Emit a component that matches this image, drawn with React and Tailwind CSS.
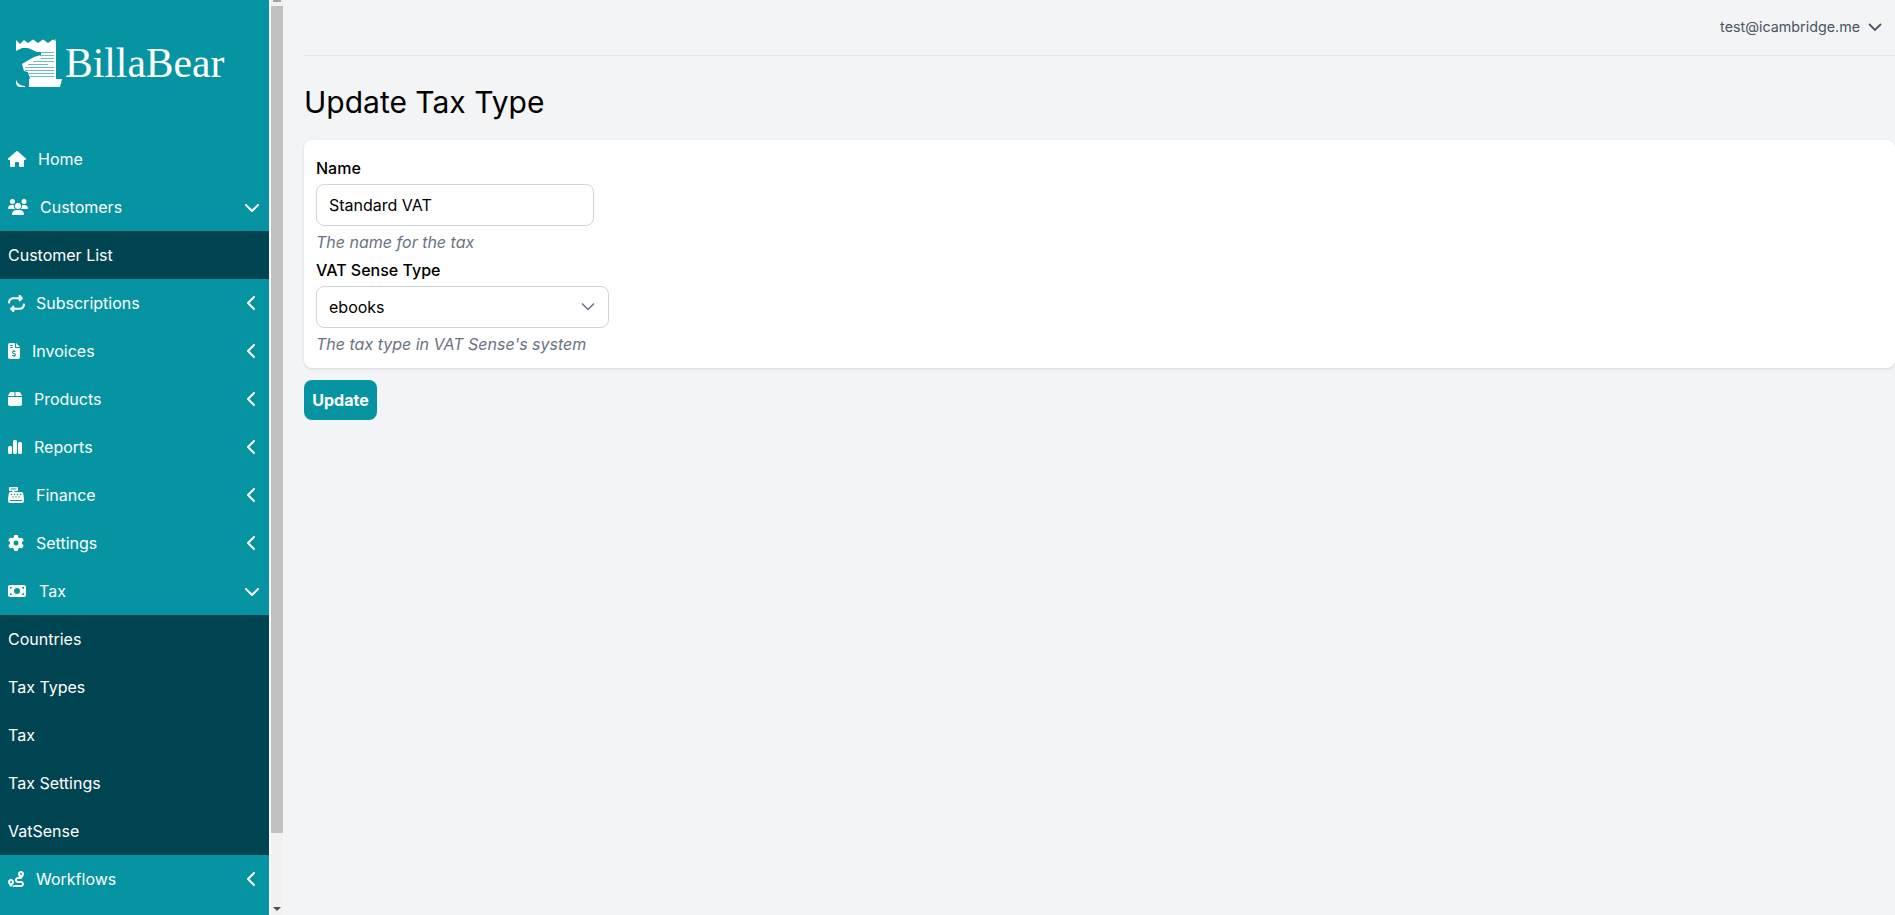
import { FaHouse, FaUsers, FaRepeat, FaFileInvoiceDollar, FaBox, FaChartSimple, FaCashRegister, FaGear, FaMoneyBill, FaChevronDown, FaChevronLeft, FaRoute } from 'react-icons/fa6'

const Logo = () => (
    <svg width="46" height="48" viewBox="0 0 46 48" fill="none" className="shrink-0">
        <path d="M0 1L4 5L8 1L12 4L17 0.5L22 4L27 0.5L32 4L37 0.5L39.5 2V0H40V40H14L12 33L8 32L6 25L18 18L25 16V13L21 13L12 9L6 9L0 12Z" fill="#fff" />
        <path d="M20 13.5H38M24 16.5H38M25 19.5H38M17 22.5H38M12 25.5H32M9 28.5H38M9 31.5H38M13 34.5H38M13 37.5H38" stroke="#0694a2" strokeWidth="1" opacity="0.6" />
        <path d="M13 40H46L44 48H13Z" fill="#fff" />
        <path d="M0 41C2 45 5 47 9 47V48H4C2 48 0 46 0 44Z" fill="#fff" />
    </svg>
)

const menu = [
    { label: 'Home', icon: FaHouse, iconClass: 'h-4 w-[18px]', gap: 'ml-[12px]' },
    { label: 'Customers', icon: FaUsers, iconClass: 'h-4 w-5', gap: 'ml-[12px]', open: true, items: ['Customer List'] },
    { label: 'Subscriptions', icon: FaRepeat, iconClass: 'h-[17px] w-[17px]', gap: 'ml-[11px]' },
    { label: 'Invoices', icon: FaFileInvoiceDollar, iconClass: 'h-4 w-3', gap: 'ml-[12px]' },
    { label: 'Products', icon: FaBox, iconClass: 'h-4 w-[14px]', gap: 'ml-[12px]' },
    { label: 'Reports', icon: FaChartSimple, iconClass: 'h-4 w-[14px]', gap: 'ml-[12px]' },
    { label: 'Finance', icon: FaCashRegister, iconClass: 'h-4 w-4', gap: 'ml-[12px]' },
    { label: 'Settings', icon: FaGear, iconClass: 'h-4 w-4', gap: 'ml-[12px]' },
    { label: 'Tax', icon: FaMoneyBill, iconClass: 'h-4 w-[18px]', gap: 'ml-[13px]', open: true, items: ['Countries', 'Tax Types', 'Tax', 'Tax Settings', 'VatSense'] },
    { label: 'Workflows', icon: FaRoute, iconClass: 'h-4 w-4', gap: 'ml-[12px]' },
]

const MenuItem = ({ item }) => {
    const Icon = item.icon
    return (
        <div>
            <div className="flex items-center h-12 pl-2 pr-2 text-white">
                <Icon className={`${item.iconClass} shrink-0`} />
                <span className={`${item.gap} text-base`}>{item.label}</span>
                {item.label !== 'Home' && (
                    <span className="ml-auto flex w-[18px] justify-center">
                        {item.open ? <FaChevronDown size={16} /> : <FaChevronLeft size={16} />}
                    </span>
                )}
            </div>
            {item.open && (
                <div className="bg-[#014451]">
                    {item.items.map((sub) => (
                        <div key={sub} className="flex items-center h-12 pl-2 text-base text-white">{sub}</div>
                    ))}
                </div>
            )}
        </div>
    )
}

export default function App() {
    return (
        <div className="flex h-[915px] overflow-hidden bg-[#f3f4f6] font-['Inter',sans-serif]">
            <aside className="flex w-[283px] shrink-0 overflow-hidden">
                <div className="w-[269px] shrink-0 bg-[#0694a2]">
                    <div className="flex h-[135px] items-start pl-[16px] pt-[39px]">
                        <Logo />
                        <span className="ml-[3px] font-['Liberation_Serif',serif] text-[41.6px] leading-[48px] text-white">BillaBear</span>
                    </div>
                    {menu.map((item) => (
                        <MenuItem key={item.label} item={item} />
                    ))}
                </div>
                <div className="w-[2px] shrink-0 bg-white" />
                <div className="flex w-[12px] shrink-0 flex-col bg-[#f1f1f1]">
                    <div className="flex h-[6px] items-start justify-center">
                        <div className="h-[2px] w-[8px] bg-[#a3a3a3]" />
                    </div>
                    <div className="h-[827px] bg-[#c1c1c1]" />
                    <div className="flex flex-1 items-end justify-center pb-[4px]">
                        <div className="h-0 w-0 border-x-4 border-t-4 border-x-transparent border-t-[#505050]" />
                    </div>
                </div>
            </aside>
            <main className="min-w-0 flex-1 pl-[21px]">
                <header className="flex h-[56px] items-center justify-end border-b border-gray-200 pb-[2px] pr-[13px] text-[14.3px] text-gray-600">
                    <span>test@icambridge.me</span>
                    <svg className="ml-2 h-[14px] w-[14px]" viewBox="0 0 14 14" fill="none" stroke="currentColor" strokeWidth="1.8">
                        <path d="M1 4L7 10L13 4" />
                    </svg>
                </header>
                <h1 className="mt-[28px] text-3xl leading-9 text-black">Update Tax Type</h1>
                <div className="mt-5 rounded-lg bg-white px-3 pb-3 pt-4 shadow">
                    <label className="mb-1 block text-base font-medium leading-6 text-black">Name</label>
                    <input readOnly value="Standard VAT" className="block h-[42px] w-[278px] rounded-lg border border-gray-300 bg-white px-3 text-base text-black" />
                    <p className="mt-1 text-base italic leading-6 text-gray-500">The name for the tax</p>
                    <label className="mb-1 mt-1 block text-base font-medium leading-6 text-black">VAT Sense Type</label>
                    <div className="flex h-[42px] w-[293px] items-center justify-between rounded-lg border border-gray-300 bg-white pl-3 pr-[13px] text-base text-black">
                        <span>ebooks</span>
                        <svg className="h-[14px] w-[14px] text-gray-500" viewBox="0 0 14 14" fill="none" stroke="currentColor" strokeWidth="1.5">
                            <path d="M1 3.5L7 9.5L13 3.5" />
                        </svg>
                    </div>
                    <p className="mt-1 text-base italic leading-6 text-gray-500">The tax type in VAT Sense's system</p>
                </div>
                <button className="mt-3 h-10 w-[73px] rounded-lg bg-[#0694a2] text-base font-bold text-white">Update</button>
            </main>
        </div>
    )
}
